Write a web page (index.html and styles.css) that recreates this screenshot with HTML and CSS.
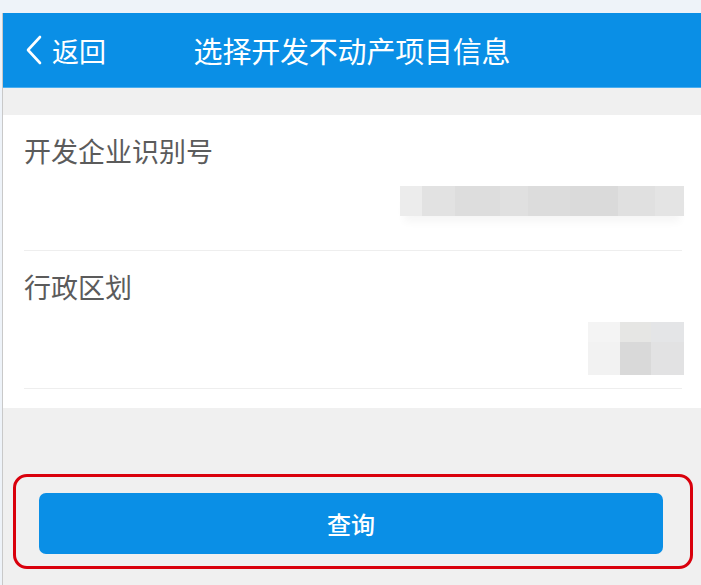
FILE: index.html
```html
<!DOCTYPE html>
<html lang="zh-CN">
<head>
    <meta charset="UTF-8">
    <meta name="viewport" content="width=device-width, initial-scale=1.0">
    <title>选择开发不动产项目信息</title>
    <link rel="stylesheet" href="styles.css">
</head>
<body>
    <div class="page">
        <header class="topbar">
            <a class="back" href="#">
                <svg class="back-icon" width="18" height="30" viewBox="0 0 18 30">
                    <path d="M15 2 L3 15 L15 28" fill="none" stroke="#ffffff" stroke-width="2.6" stroke-linecap="round" stroke-linejoin="round"/>
                </svg>
                <span>返回</span>
            </a>
            <h1 class="title">选择开发不动产项目信息</h1>
            <span></span>
        </header>

        <div class="gap"></div>

        <div class="card">
            <div class="field">
                <p class="label">开发企业识别号</p>
                <div class="value value-code"></div>
            </div>
            <div class="field field-last">
                <p class="label">行政区划</p>
                <div class="value value-area"></div>
            </div>
        </div>

        <div class="actions">
            <div class="highlight">
                <button type="button" class="btn">查询</button>
            </div>
        </div>
    </div>
</body>
</html>
```

FILE: styles.css
```css
body {
    margin: 0;
    background: #eef3f9;
    font-family: "Noto Sans CJK SC", "Noto Sans", sans-serif;
}

.page {
    margin-top: 13px;
    margin-left: 2px;
    border-left: 1px solid #c9c9c9;
    background: #f0f0f0;
    height: 572px;
}

.topbar {
    display: grid;
    grid-template-columns: 1fr auto 1fr;
    align-items: center;
    height: 75px;
    background: #0a8fe6;
    border-bottom: 1px solid #4aaef0;
    box-sizing: border-box;
}

.back {
    display: flex;
    align-items: center;
    gap: 9px;
    padding-left: 22px;
    color: #ffffff;
    text-decoration: none;
    font-size: 27px;
    line-height: 1;
}

.back-icon {
    display: block;
}

.title {
    margin: 0;
    color: #ffffff;
    font-size: 29px;
    font-weight: normal;
    line-height: 1;
    letter-spacing: -0.2px;
}

.gap {
    height: 27px;
}

.card {
    background: #ffffff;
    padding: 0 19px 19px 21px;
}

.field {
    padding-top: 20px;
    border-bottom: 1px solid #eeeeee;
}

.label {
    margin: 0;
    font-size: 27px;
    line-height: 32px;
    color: #5b5b5b;
}

.value {
    margin-left: auto;
    margin-right: -2px;
}

.value-code {
    width: 284px;
    height: 30px;
    margin-top: 19px;
    margin-bottom: 34px;
    background: linear-gradient(to right,
        #ececec 0, #ececec 22px,
        #e2e2e2 22px, #e2e2e2 55px,
        #dddddd 55px, #dddddd 100px,
        #e0e0e0 100px, #e0e0e0 128px,
        #dcdcdc 128px, #dcdcdc 170px,
        #dadada 170px, #dadada 218px,
        #e0e0e0 218px, #e0e0e0 255px,
        #e4e4e4 255px);
    box-shadow: 0 10px 8px -4px #f6f6f6;
}

.value-area {
    width: 96px;
    height: 53px;
    margin-top: 19px;
    margin-bottom: 13px;
    background:
        linear-gradient(to right, #f4f4f4 0, #f4f4f4 32px, #e6e6e4 32px, #e6e6e4 63px, #e4e5e7 63px) top / 100% 20px no-repeat,
        linear-gradient(to right, #f2f2f2 0, #f2f2f2 32px, #d9d9d9 32px, #d9d9d9 63px, #e2e2e3 63px) bottom / 100% 33px no-repeat;
}

.actions {
    padding: 66px 8px 0 10px;
}

.highlight {
    border: 3px solid #d9000c;
    border-radius: 14px;
    padding: 16px 27px 12px 23px;
}

.btn {
    display: block;
    width: 100%;
    height: 61px;
    border: none;
    border-radius: 7px;
    background: #0a8fe6;
    color: #ffffff;
    font-family: "Noto Sans CJK SC", "Noto Sans", sans-serif;
    font-size: 24px;
    font-weight: 500;
    cursor: pointer;
}
```
